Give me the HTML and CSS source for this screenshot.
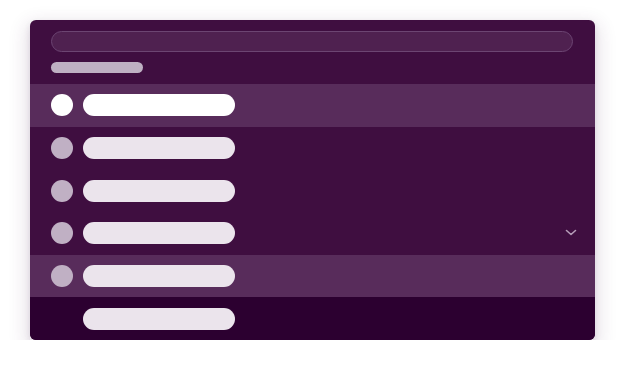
FILE: index.html
```html
<!DOCTYPE html>
<html>
<head>
<meta charset="utf-8">
<link rel="stylesheet" href="styles.css">
</head>
<body>
<div class="card">
  <div class="head">
    <div class="search"></div>
    <div class="label"></div>
  </div>
  <div class="row active">
    <span class="dot dot-on"></span><span class="pill pill-on"></span>
  </div>
  <div class="row">
    <span class="dot"></span><span class="pill"></span>
  </div>
  <div class="row">
    <span class="dot"></span><span class="pill"></span>
  </div>
  <div class="row">
    <span class="dot"></span><span class="pill"></span>
    <svg class="chev" width="12" height="8" viewBox="0 0 12 8"><path d="M1.5 1.5 L6 5.5 L10.5 1.5" fill="none" stroke="#b49bb7" stroke-width="1.6" stroke-linecap="round" stroke-linejoin="round"/></svg>
  </div>
  <div class="row hover">
    <span class="dot"></span><span class="pill"></span>
  </div>
  <div class="row footer">
    <span class="dot ghost"></span><span class="pill"></span>
  </div>
</div>
</body>
</html>
```
FILE: styles.css
```css
html, body {
  margin: 0;
  padding: 0;
  background: #ffffff;
}
body {
  padding: 20px 0 0 30px;
  font-family: "Liberation Sans", Arial, sans-serif;
}
.card {
  width: 565px;
  height: 320px;
  background: #3f0e40;
  border-radius: 6px;
  overflow: hidden;
  box-shadow: 0 7px 18px 5px rgba(70, 30, 80, 0.12), 0 3px 6px rgba(70, 30, 80, 0.12);
  display: flex;
  flex-direction: column;
}
.head {
  padding: 11px 22px 0 21px;
  height: 64px;
  box-sizing: border-box;
  flex-shrink: 0;
}
.search {
  height: 21px;
  box-sizing: border-box;
  border-radius: 11px;
  background: #4f2150;
  border: 1px solid #6c4572;
}
.label {
  margin-top: 10px;
  width: 92px;
  height: 11px;
  border-radius: 6px;
  background: #bfb0c3;
}
.row {
  height: 42.667px;
  display: flex;
  align-items: center;
  padding-left: 21px;
  padding-right: 18px;
  gap: 10px;
  flex-shrink: 0;
}
.row.active, .row.hover {
  background: #582c5b;
}
.row.footer {
  background: #2c0030;
  flex-grow: 1;
}
.dot {
  width: 22px;
  height: 22px;
  border-radius: 50%;
  background: #c0b0c4;
  flex-shrink: 0;
}
.dot-on {
  background: #ffffff;
}
.dot.ghost {
  background: transparent;
}
.pill {
  width: 152px;
  height: 22px;
  border-radius: 11px;
  background: #ebe4ec;
}
.pill-on {
  background: #ffffff;
}
.chev {
  margin-left: auto;
  display: block;
}
```
